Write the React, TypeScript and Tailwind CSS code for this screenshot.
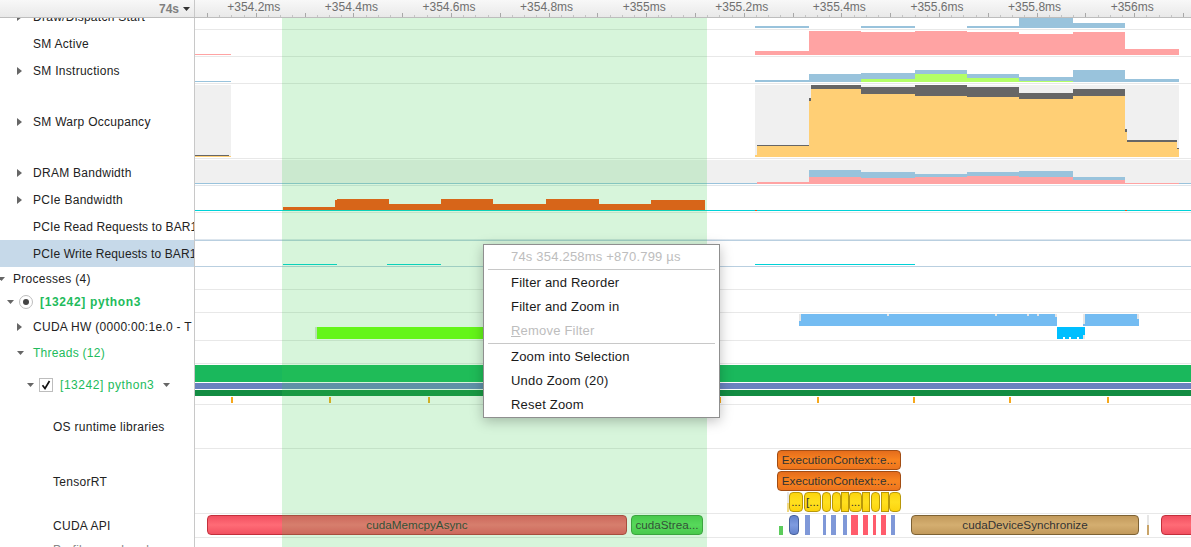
import React from 'react';

type Box = [number, number, number, number, string];

const BLUE = '#99c3dc';
const PINK = '#ffa3a3';
const LIME = '#b3ff66';
const DARK = '#666666';
const AMBER = '#ffcf75';
const PANEL = '#f0f0f0';
const CYAN = '#00d2d8';
const RUST = '#ff4c0d'; // sits under the selection tint, comes out as the burnt orange
const SKY = '#74bcf2';
const NOTCH = '#e6e6e6';

// [x0, x1, y0, y1, colour] in page coordinates, the chart's viewBox maps them into its row
const topBars: Box[] = [
  [755, 809, 26, 28, BLUE],
  [861, 915, 26, 28, BLUE],
  [967, 1019, 26, 28, BLUE],
  [1019, 1073, 3, 28, BLUE],
  [1073, 1125, 23, 28, BLUE],
];

const smActive: Box[] = [
  [195, 231, 54, 55, PINK],
  [755, 809, 51, 55, PINK],
  [809, 861, 31, 55, PINK],
  [861, 915, 32, 55, PINK],
  [915, 967, 31, 55, PINK],
  [967, 1019, 32, 55, PINK],
  [1019, 1073, 34, 55, PINK],
  [1073, 1125, 32, 55, PINK],
  [1125, 1179, 49, 55, PINK],
];

const smInstructions: Box[] = [
  [195, 231, 81, 82, BLUE],
  [755, 809, 80, 82, BLUE],
  [809, 861, 74, 82, BLUE],
  [861, 915, 73, 82, BLUE],
  [915, 967, 70, 82, BLUE],
  [967, 1019, 74, 82, BLUE],
  [1019, 1073, 77, 82, BLUE],
  [1073, 1125, 70, 82, BLUE],
  [1125, 1179, 79, 82, BLUE],
  [861, 915, 79, 82, LIME],
  [915, 967, 74, 82, LIME],
  [967, 1019, 78, 82, LIME],
  [1019, 1073, 81, 82, LIME],
];

const smWarp: Box[] = [
  [195, 231, 85, 157, PANEL],
  [755, 1179, 85, 157, PANEL],
  [195, 229, 155, 156, DARK],
  [195, 231, 156, 157, AMBER],
  [755, 757, 155, 157, AMBER],
  [757, 809, 145, 146, DARK],
  [757, 809, 146, 157, AMBER],
  [809, 811, 98, 101, DARK],
  [809, 811, 101, 157, AMBER],
  [811, 861, 85, 89, DARK],
  [811, 861, 89, 157, AMBER],
  [861, 915, 87, 94, DARK],
  [861, 915, 94, 157, AMBER],
  [915, 967, 85, 96, DARK],
  [915, 967, 96, 157, AMBER],
  [967, 1019, 87, 97, DARK],
  [967, 1019, 97, 157, AMBER],
  [1019, 1073, 93, 99, DARK],
  [1019, 1073, 99, 157, AMBER],
  [1073, 1125, 89, 96, DARK],
  [1073, 1125, 96, 157, AMBER],
  [1125, 1127, 129, 132, DARK],
  [1125, 1127, 132, 157, AMBER],
  [1127, 1177, 140, 142, DARK],
  [1127, 1177, 142, 157, AMBER],
  [1177, 1179, 148, 149, DARK],
  [1177, 1179, 149, 157, AMBER],
];

const dram: Box[] = [
  [195, 1191, 160, 184, PANEL],
  [195, 757, 183, 184, BLUE],
  [1179, 1191, 183, 184, BLUE],
  [757, 809, 182, 184, PINK],
  [809, 861, 170, 177, BLUE],
  [809, 861, 177, 184, PINK],
  [861, 915, 172, 178, BLUE],
  [861, 915, 178, 184, PINK],
  [915, 967, 174, 177, BLUE],
  [915, 967, 177, 184, PINK],
  [967, 1019, 172, 176, BLUE],
  [967, 1019, 176, 184, PINK],
  [1019, 1073, 171, 177, BLUE],
  [1019, 1073, 177, 184, PINK],
  [1073, 1125, 177, 180, BLUE],
  [1073, 1125, 180, 184, PINK],
  [1125, 1179, 183, 184, PINK],
];

const pcieBandwidth: Box[] = [
  [283, 335, 207, 210, RUST],
  [335, 337, 200, 210, RUST],
  [337, 389, 199, 210, RUST],
  [389, 441, 204, 210, RUST],
  [441, 493, 199, 210, RUST],
  [493, 546, 204, 210, RUST],
  [546, 599, 199, 210, RUST],
  [599, 651, 204, 210, RUST],
  [651, 705, 200, 210, RUST],
  [195, 1191, 210, 211, CYAN],
  [755, 757, 210, 211, '#e8501a'],
  [1125, 1127, 210, 211, '#e8501a'],
];

const pcieWrite: Box[] = [
  [283, 337, 264, 265, CYAN],
  [387, 441, 264, 265, CYAN],
  [755, 915, 264, 265, CYAN],
];

const cudaHw: Box[] = [
  [315, 317, 327, 339, '#d8e4d0'],
  [317, 500, 327, 339, '#70ff0d'],
  [799, 1057, 314, 326, SKY],
  [1085, 1139, 314, 326, SKY],
  [799, 801, 314, 321, NOTCH],
  [887, 889, 314, 316, NOTCH],
  [995, 997, 314, 316, NOTCH],
  [1027, 1029, 314, 316, NOTCH],
  [1037, 1039, 314, 316, NOTCH],
  [1055, 1057, 314, 317, NOTCH],
  [1083, 1085, 314, 324, NOTCH],
  [1083, 1085, 324, 326, SKY],
  [1137, 1139, 314, 319, NOTCH],
  [1057, 1085, 327, 337, '#00bfff'],
  [1057, 1063, 337, 339, '#00bfff'],
  [1065, 1069, 337, 339, '#00bfff'],
  [1071, 1077, 337, 339, '#00bfff'],
  [1079, 1083, 337, 339, '#00bfff'],
  [1083, 1085, 335, 339, NOTCH],
];

const threadBars: Box[] = [
  [195, 1191, 365, 382, '#1ab85c'],
  [195, 1191, 383, 389, '#6a82bf'],
  [195, 1191, 390, 396, '#128c42'],
  ...[231, 329, 428, 527, 620, 719, 817, 913, 1009, 1107].map(
    (x): Box => [x, x + 2, 397, 403, '#f5a81c'],
  ),
];

const tensorBars: Box[] = [
  [787, 789, 492, 503, NOTCH],
  [787, 789, 503, 512, '#f0d880'],
];

const apiBars: Box[] = [
  [779, 783, 526, 535, '#5ccc5c'],
  [805, 810, 515, 535, '#7f98d8'],
  [823, 826, 515, 535, '#7f98d8'],
  [831, 836, 515, 535, '#7f98d8'],
  [843, 847, 515, 535, '#7f98d8'],
  [851, 858, 515, 535, '#ff5c6c'],
  [863, 868, 515, 535, '#ff5c6c'],
  [873, 876, 515, 535, '#ff5c6c'],
  [881, 886, 515, 535, '#ff5c6c'],
  [891, 895, 515, 535, '#7f98d8'],
  [1147, 1149, 515, 525, NOTCH],
  [1147, 1149, 525, 535, '#c9a468'],
];

const RED = 'from-[#f25061] via-[#ff6b76] to-[#f25061] border-[#c2303c]';
const GREEN = 'from-[#4dc94d] via-[#5fdc5f] to-[#4dc94d] border-[#3c9a3c]';
const TAN = 'from-[#c29a5c] via-[#d4ae70] to-[#c29a5c] border-[#7d6234]';
const ORANGE = 'from-[#e46c1c] via-[#f98420] to-[#ec741e] border-[#a24d14]';
const YELLOW = 'from-[#fcd40c] via-[#ffe01f] to-[#fcd40c] border-[#b8980a]';
const NAVY = 'from-[#6482cc] via-[#7f9be0] to-[#6482cc] border-[#46609c]';

type SliceData = { x0: number; x1: number; y0: number; y1: number; tone: string; text?: string; square?: boolean };

const tensorSlices: SliceData[] = [
  { x0: 777, x1: 901, y0: 450, y1: 470, tone: ORANGE, text: 'ExecutionContext::e...' },
  { x0: 777, x1: 901, y0: 471, y1: 491, tone: ORANGE, text: 'ExecutionContext::e...' },
  { x0: 789, x1: 803, y0: 492, y1: 512, tone: YELLOW, text: '...' },
  { x0: 804, x1: 821, y0: 492, y1: 512, tone: YELLOW, text: '[...' },
  { x0: 822, x1: 831, y0: 492, y1: 512, tone: YELLOW },
  { x0: 832, x1: 841, y0: 492, y1: 512, tone: YELLOW },
  { x0: 841, x1: 849, y0: 492, y1: 512, tone: YELLOW, square: true },
  { x0: 849, x1: 862, y0: 492, y1: 512, tone: YELLOW, text: '...' },
  { x0: 862, x1: 870, y0: 492, y1: 512, tone: YELLOW, square: true },
  { x0: 871, x1: 880, y0: 492, y1: 512, tone: YELLOW },
  { x0: 881, x1: 889, y0: 492, y1: 512, tone: YELLOW, square: true },
  { x0: 889, x1: 901, y0: 492, y1: 512, tone: YELLOW },
];

const apiSlices: SliceData[] = [
  { x0: 207, x1: 627, y0: 515, y1: 535, tone: RED, text: 'cudaMemcpyAsync' },
  { x0: 631, x1: 703, y0: 515, y1: 535, tone: GREEN, text: 'cudaStrea...' },
  { x0: 789, x1: 799, y0: 515, y1: 535, tone: NAVY },
  { x0: 911, x1: 1139, y0: 515, y1: 535, tone: TAN, text: 'cudaDeviceSynchronize' },
  { x0: 1161, x1: 1200, y0: 515, y1: 535, tone: RED },
];

const Chart = ({ top, h, boxes }: { top: number; h: number; boxes: Box[] }) => (
  <svg className="block w-[996px] h-full" viewBox={`195 ${top} 996 ${h}`} preserveAspectRatio="none" shapeRendering="crispEdges">
    {boxes.map(([x0, x1, y0, y1, fill], i) => (
      <rect key={i} x={x0} y={y0} width={x1 - x0} height={y1 - y0} fill={fill} />
    ))}
  </svg>
);

// places are page x / y, the row's top is taken off
const Slices = ({ top, items }: { top: number; items: SliceData[] }) => (
  <>
    {items.map((s, i) => (
      <div
        key={i}
        className={`absolute flex items-center justify-center overflow-hidden whitespace-nowrap border bg-linear-to-b text-[11.7px] leading-none text-[#333] ${s.tone} ${s.square ? '' : 'rounded-[4px]'}`}
        style={{ left: s.x0 - 195, width: s.x1 - s.x0, top: s.y0 - top, height: s.y1 - s.y0 }}
      >
        {s.text}
      </div>
    ))}
  </>
);

const ArrowRight = () => (
  <svg width="5" height="8" viewBox="0 0 5 8" className="block">
    <path d="M0 0L5 4L0 8Z" fill="#666" />
  </svg>
);

const ArrowDown = () => (
  <svg width="7" height="4" viewBox="0 0 7 4" className="block">
    <path d="M0 0H7L3.5 4Z" fill="#666" />
  </svg>
);

const Row = ({
  h,
  label,
  line = 'border-[#e8e8e8]',
  selected,
  children,
}: {
  h: string;
  label: React.ReactNode;
  line?: string;
  selected?: boolean;
  children?: React.ReactNode;
}) => (
  <div className={`flex ${h}`}>
    <div
      className={`flex w-[195px] shrink-0 items-center overflow-hidden whitespace-nowrap border-r border-[#c8c8c8] text-[12px] tracking-[0.28px] text-[#222] ${selected ? 'bg-[#c6d9e9]' : ''}`}
    >
      {label}
    </div>
    <div className={`relative w-[996px] border-b ${line}`}>{children}</div>
  </div>
);

const Leaf = ({ text, open }: { text: string; open?: boolean }) => (
  <>
    <span className="ml-[17px] w-[16px] shrink-0">{open ? <ArrowDown /> : <ArrowRight />}</span>
    {text}
  </>
);

const Plain = ({ text }: { text: string }) => <span className="ml-[33px]">{text}</span>;

const LongLabel = ({ text }: { text: string }) => <span className="ml-[33px] tracking-[0.14px]">{text}</span>;

const MenuItem = ({ children, off }: { children: React.ReactNode; off?: boolean }) => (
  <div className={`flex h-[24px] items-center pl-[27px] ${off ? 'text-[#bdbdbd]' : 'text-[#1a1a1a]'}`}>{children}</div>
);

const ticks = Array.from({ length: 82 }, (_, i) => i);
const tickLabels = ['+354.2ms', '+354.4ms', '+354.6ms', '+354.8ms', '+355ms', '+355.2ms', '+355.4ms', '+355.6ms', '+355.8ms', '+356ms'];

export default function App() {
  return (
    <div className="relative h-[547px] w-[1191px] overflow-hidden bg-white font-['Liberation_Sans',Arial,sans-serif]">
      <div className="flex h-[18px] border-b border-[#bdbdbd] bg-linear-to-b from-[#f8f8f8] to-[#e9e9e9]">
        <div className="flex w-[195px] shrink-0 items-center justify-end border-r border-[#c8c8c8] pr-[4px] text-[12px] font-bold text-[#808080]">
          74s
          <svg width="7" height="4" viewBox="0 0 7 4" className="ml-[4px]">
            <path d="M0 0H7L3.5 4Z" fill="#333" />
          </svg>
        </div>
        <div className="flex flex-col">
          <div className="flex h-[13px] items-center whitespace-nowrap pl-[10px] text-[12px] leading-none text-[#6f6f6f]">
            {tickLabels.map((t) => (
              <span key={t} className="w-[97.6px] shrink-0 text-center">
                {t}
              </span>
            ))}
          </div>
          <svg width="996" height="4" viewBox="195 13 996 4" className="block" shapeRendering="crispEdges">
            {ticks.map((i) => {
              const x = Math.round(207 + 12.2 * i);
              const major = i % 4 === 0;
              return <rect key={i} x={x} y={major ? 13 : 15} width="1" height={major ? 4 : 2} fill={major ? '#a8a8a8' : '#c4c4c4'} />;
            })}
          </svg>
        </div>
      </div>

      <div className="h-[529px] overflow-hidden">
        <div className="-mt-[15px]">
          <Row h="h-[27px]" label={<Leaf text="Draw/Dispatch Start" />}>
            <Chart top={3} h={26} boxes={topBars} />
          </Row>
          <Row h="h-[27px]" label={<Plain text="SM Active" />}>
            <Chart top={30} h={26} boxes={smActive} />
          </Row>
          <Row h="h-[27px]" label={<Leaf text="SM Instructions" />}>
            <Chart top={57} h={26} boxes={smInstructions} />
          </Row>
          <Row h="h-[75px]" label={<Leaf text="SM Warp Occupancy" />}>
            <Chart top={84} h={74} boxes={smWarp} />
          </Row>
          <Row h="h-[27px]" line="border-[#dfe5ea]" label={<Leaf text="DRAM Bandwidth" />}>
            <Chart top={159} h={26} boxes={dram} />
          </Row>
          <Row h="h-[27px]" label={<Leaf text="PCIe Bandwidth" />}>
            <Chart top={186} h={26} boxes={pcieBandwidth} />
          </Row>
          <Row h="h-[27px]" line="border-[#dde6ee]" label={<LongLabel text="PCIe Read Requests to BAR1" />} />
          <Row h="h-[27px]" line="border-[#b9cfe0]" selected label={<LongLabel text="PCIe Write Requests to BAR1" />}>
            <div className="h-full border-t border-[#b9cfe0]">
              <Chart top={241} h={25} boxes={pcieWrite} />
            </div>
          </Row>
          <Row
            h="h-[23px]"
            label={
              <>
                <span className="-ml-[2px] w-[15px] shrink-0">
                  <ArrowDown />
                </span>
                Processes (4)
              </>
            }
          />
          <Row
            h="h-[23px]"
            label={
              <>
                <span className="ml-[7px] w-[12px] shrink-0">
                  <ArrowDown />
                </span>
                <span className="mr-[7px] flex h-[14px] w-[14px] shrink-0 items-center justify-center rounded-full border border-[#bdbdbd]">
                  <span className="h-[6px] w-[6px] rounded-full bg-[#444]" />
                </span>
                <span className="font-bold tracking-[0.65px] text-[#22bb5c]">[13242] python3</span>
              </>
            }
          />
          <Row h="h-[28px]" label={<Leaf text="CUDA HW (0000:00:1e.0 - T" />}>
            <Chart top={313} h={27} boxes={cudaHw} />
          </Row>
          <Row
            h="h-[23px]"
            label={
              <>
                <span className="ml-[17px] w-[16px] shrink-0">
                  <ArrowDown />
                </span>
                <span className="text-[#22bb5c]">Threads (12)</span>
              </>
            }
          />
          <Row
            h="h-[41px]"
            label={
              <>
                <span className="ml-[27px] w-[12px] shrink-0">
                  <ArrowDown />
                </span>
                <span className="mr-[7px] flex h-[14px] w-[14px] shrink-0 items-center justify-center border border-[#bdbdbd] bg-white">
                  <svg width="10" height="10" viewBox="0 0 10 10">
                    <path d="M1.5 5.2L4 8.5L8.5 1" fill="none" stroke="#111" strokeWidth="1.7" />
                  </svg>
                </span>
                <span className="tracking-[0.55px] text-[#22bb5c]">[13242] python3</span>
                <span className="ml-[9px]">
                  <ArrowDown />
                </span>
              </>
            }
          >
            <Chart top={364} h={40} boxes={threadBars} />
          </Row>
          <Row h="h-[44px]" label={<span className="ml-[53px]">OS runtime libraries</span>} />
          <Row h="h-[65px]" label={<span className="ml-[53px]">TensorRT</span>}>
            <Chart top={449} h={64} boxes={tensorBars} />
            <Slices top={449} items={tensorSlices} />
          </Row>
          <Row h="h-[24px]" label={<span className="ml-[53px]">CUDA API</span>}>
            <Chart top={514} h={23} boxes={apiBars} />
            <Slices top={514} items={apiSlices} />
          </Row>
          <Row h="h-[24px]" label={<span className="ml-[53px] text-[#888]">Profiler overhead</span>} />
        </div>
      </div>

      {/* time range selection */}
      <div className="absolute bottom-0 left-[282px] top-[18px] w-[425px] bg-[#36cf4c]/20" />

      <div className="absolute left-[483px] top-[244px] w-[237px] border border-[#8f8f8f] bg-white text-[13px] tracking-[0.2px] shadow-[0_3px_12px_rgba(0,0,0,0.25)]">
        <MenuItem off>74s 354.258ms +870.799 µs</MenuItem>
        <div className="mx-[4px] mb-[1px] h-px bg-[#c8c8c8]" />
        <MenuItem>Filter and Reorder</MenuItem>
        <MenuItem>Filter and Zoom in</MenuItem>
        <MenuItem off>
          <span className="underline">R</span>emove Filter
        </MenuItem>
        <div className="mx-[4px] mb-[1px] h-px bg-[#c8c8c8]" />
        <MenuItem>Zoom into Selection</MenuItem>
        <MenuItem>Undo Zoom (20)</MenuItem>
        <MenuItem>Reset Zoom</MenuItem>
      </div>
    </div>
  );
}
